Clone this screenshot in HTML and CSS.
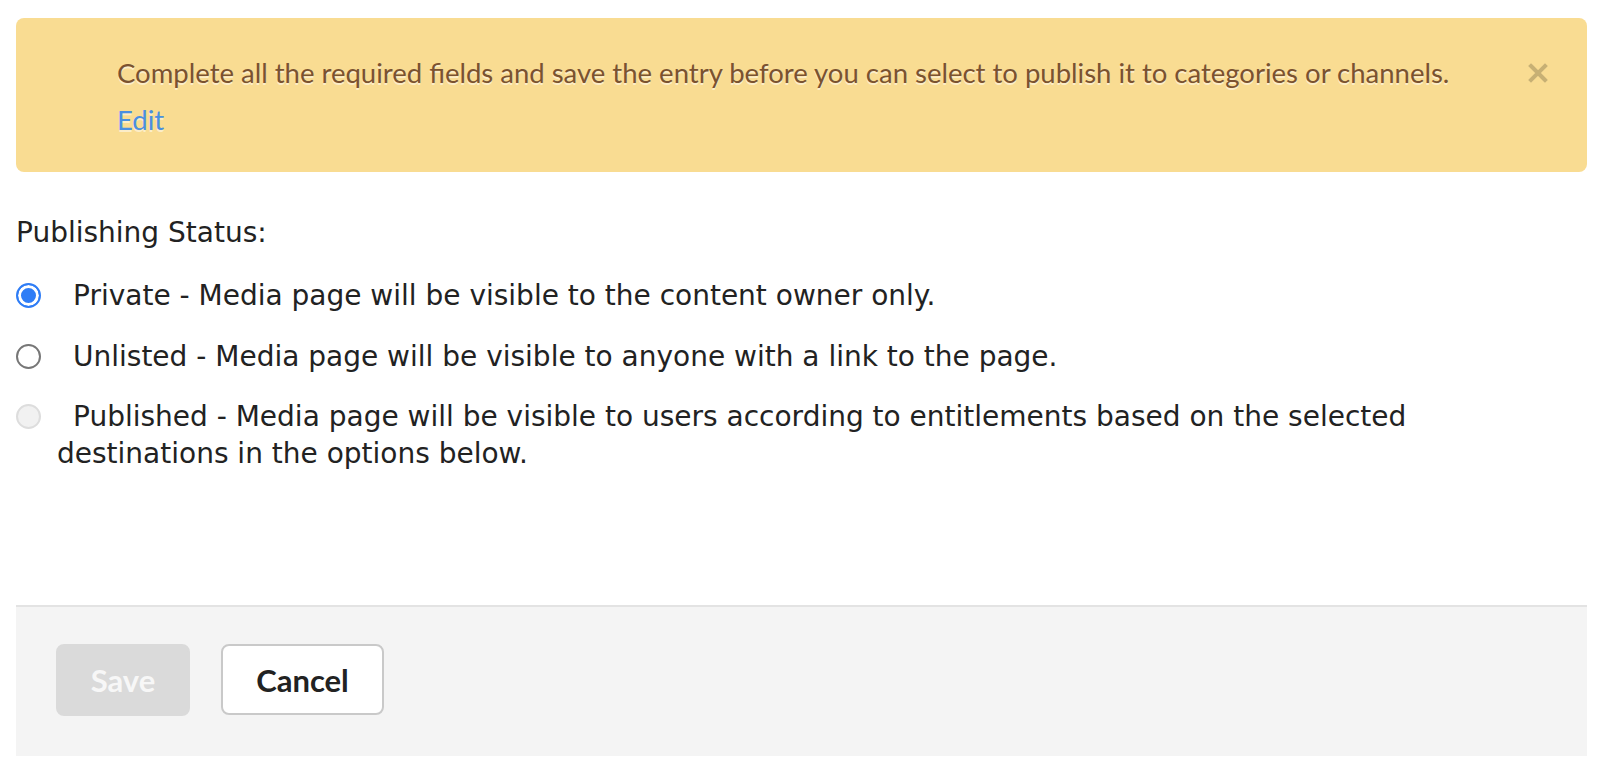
FILE: index.html
```html
<!DOCTYPE html>
<html>
<head>
<meta charset="utf-8">
<title>Publishing Status</title>
<link rel="stylesheet" href="styles.css">
</head>
<body>
<div class="page">

<!-- warning -->
<div class="alert">
  <div class="alert-text">
    <div>Complete all the required fields and save the entry before you can select to publish it to categories or channels.</div>
    <a class="alert-link" href="#">Edit</a>
  </div>
  <button class="alert-close" type="button" aria-label="Close">
    <svg width="20" height="20" viewBox="0 0 20 20"><path d="M3 3 L17 17 M17 3 L3 17" stroke="currentColor" stroke-width="4" stroke-linecap="square" fill="none"/></svg>
  </button>
</div>

<!-- status -->
<div class="status">
  <div class="status-title">Publishing Status:</div>
  <div class="option"><input class="radio" type="radio" name="status" id="st-private" checked><label for="st-private">Private - Media page will be visible to the content owner only.</label></div>
  <div class="option"><input class="radio" type="radio" name="status" id="st-unlisted"><label for="st-unlisted">Unlisted - Media page will be visible to anyone with a link to the page.</label></div>
  <div class="option"><input class="radio" type="radio" name="status" id="st-published" disabled><label for="st-published">Published - Media page will be visible to users according to entitlements based on the selected destinations in the options below.</label></div>
</div>

<!-- buttons -->
<div class="footer">
  <button class="btn btn-save" type="button" disabled>Save</button>
  <button class="btn btn-cancel" type="button">Cancel</button>
</div>

</div>
</body>
</html>
```

FILE: styles.css
```css
body { margin: 0; padding: 0; background: #fff; color: #222; }
.page { margin: 18px 13px 0 16px; }

.alert { display: flex; align-items: flex-start; background: #f9dc92; border-radius: 8px; padding: 32px 39px 29px 101px; font-family: "Lato", sans-serif; font-size: 27.5px; line-height: 46px; color: #7a5230; text-shadow: 0 2px 0 rgba(255,255,255,0.5); }
.alert-text { flex: 1; }
.alert-link { display: inline-block; margin-top: 1px; color: #4a8fe0; text-decoration: none; }
.alert-close { margin-top: 13px; padding: 0; border: 0; background: none; color: rgba(0,0,0,0.2); width: 20px; height: 20px; cursor: pointer; }
.alert-close svg { display: block; }

.status { margin-top: 42px; max-width: 1420px; font-family: "DejaVu Sans", sans-serif; font-size: 28px; line-height: 37px; color: #222; }
.status-title { margin-bottom: 26px; }
.option { padding-left: 41px; margin-bottom: 23.5px; }
.radio { -webkit-appearance: none; appearance: none; display: inline-block; box-sizing: border-box; width: 25px; height: 25px; margin: 0 32px 0 -41px; vertical-align: -3px; border: 2px solid #777; border-radius: 50%; background: #fff; }
.radio:checked { border: 2px solid #2f7df6; box-shadow: inset 0 0 0 3px #fff; background: #2f7df6; }
.radio:disabled { border: 2px solid #ddd; background: #f1f1f1; }
.option label { cursor: pointer; }

.footer { margin-top: 133px; border-top: 2px solid #e3e3e3; background: #f4f4f4; padding: 37px 40px 40px; display: flex; gap: 31px; }
.btn { box-sizing: border-box; height: 72px; padding: 0 32px; border-radius: 8px; font-family: "Lato", sans-serif; font-weight: 700; font-size: 31px; cursor: pointer; }
.btn-save { width: 134px; background: #dadada; border: 2px solid #dadada; color: #f7f7f7; cursor: default; }
.btn-cancel { width: 163px; height: 71px; background: #fff; border: 2px solid #c9c9c9; color: #222; }
```
